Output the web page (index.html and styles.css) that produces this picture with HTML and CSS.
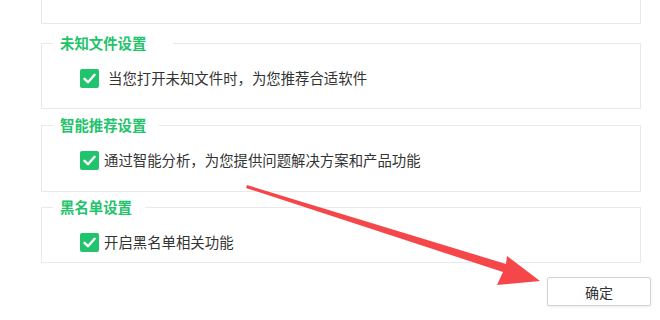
FILE: index.html
```html
<!DOCTYPE html>
<html lang="zh-CN">
<head>
<meta charset="utf-8">
<link rel="stylesheet" href="styles.css">
</head>
<body>
<div class="page">
  <div class="box box-top"></div>

  <div class="box box-2">
    <div class="legend legend-wide">未知文件设置</div>
    <div class="row">
      <span class="check"><svg viewBox="0 0 19 19" width="19" height="19"><path d="M4.5 9.8 L8 13.2 L14.6 5.8" fill="none" stroke="#fff" stroke-width="2.4" stroke-linecap="round" stroke-linejoin="round"/></svg></span>
      <span class="label label-first">当您打开未知文件时，为您推荐合适软件</span>
    </div>
  </div>

  <div class="box box-3">
    <div class="legend">智能推荐设置</div>
    <div class="row">
      <span class="check"><svg viewBox="0 0 19 19" width="19" height="19"><path d="M4.5 9.8 L8 13.2 L14.6 5.8" fill="none" stroke="#fff" stroke-width="2.4" stroke-linecap="round" stroke-linejoin="round"/></svg></span>
      <span class="label">通过智能分析，为您提供问题解决方案和产品功能</span>
    </div>
  </div>

  <div class="box box-4">
    <div class="legend">黑名单设置</div>
    <div class="row">
      <span class="check"><svg viewBox="0 0 19 19" width="19" height="19"><path d="M4.5 9.8 L8 13.2 L14.6 5.8" fill="none" stroke="#fff" stroke-width="2.4" stroke-linecap="round" stroke-linejoin="round"/></svg></span>
      <span class="label">开启黑名单相关功能</span>
    </div>
  </div>

  <div class="actions">
    <button class="btn">确定</button>
  </div>

  <svg class="arrow" viewBox="0 0 660 320" width="660" height="320">
    <polygon points="247,185 506,264 507,256 540,281 497,285 503,272 246,188" fill="#f5474a"/>
  </svg>
</div>
</body>
</html>
```

FILE: styles.css
```css
html, body {
  margin: 0;
  padding: 0;
  background: #fff;
}

body {
  font-family: "Noto Sans CJK SC", "Microsoft YaHei", sans-serif;
  color: #333;
  width: 660px;
  height: 320px;
  overflow: hidden;
}

.page {
  position: relative;
  width: 660px;
  height: 320px;
  padding-left: 41px;
  box-sizing: border-box;
}

.box {
  width: 600px;
  box-sizing: border-box;
  border: 1px solid #e9e9e9;
  background: #fff;
}

.box-top {
  height: 24px;
  border-top: none;
}

.box-2 {
  margin-top: 19px;
  height: 66px;
}

.box-3 {
  margin-top: 16px;
  height: 67px;
}

.box-4 {
  margin-top: 15px;
  height: 56px;
}

.legend {
  display: block;
  width: fit-content;
  margin-top: -11px;
  margin-left: 11px;
  padding: 0 13px 0 7px;
  height: 20px;
  line-height: 20px;
  font-size: 14.4px;
  font-weight: 600;
  color: #22c36b;
  background: #fff;
}

.legend-wide {
  padding-right: 27px;
}

.row {
  display: flex;
  align-items: center;
  margin-top: 15px;
  margin-left: 38px;
  height: 20px;
}

.check {
  width: 19px;
  height: 19px;
  border-radius: 2px;
  background: #21c36c;
  display: flex;
}

.label {
  margin-left: 5px;
  font-size: 14.4px;
  line-height: 20px;
  color: #333;
}

.label-first {
  margin-left: 9px;
}

.actions {
  display: flex;
  justify-content: flex-end;
  padding-right: 9px;
  margin-left: -41px;
  margin-top: 14px;
}

.btn {
  width: 104px;
  height: 29px;
  border: 1px solid #d4d4d4;
  border-radius: 2px;
  background: #fff;
  box-shadow: 0 1px 2px rgba(0,0,0,0.08);
  font-family: "Noto Sans CJK SC", "Microsoft YaHei", sans-serif;
  font-size: 14px;
  color: #333;
  padding: 0;
}

.arrow {
  position: absolute;
  left: 0;
  top: 0;
  pointer-events: none;
}
```
